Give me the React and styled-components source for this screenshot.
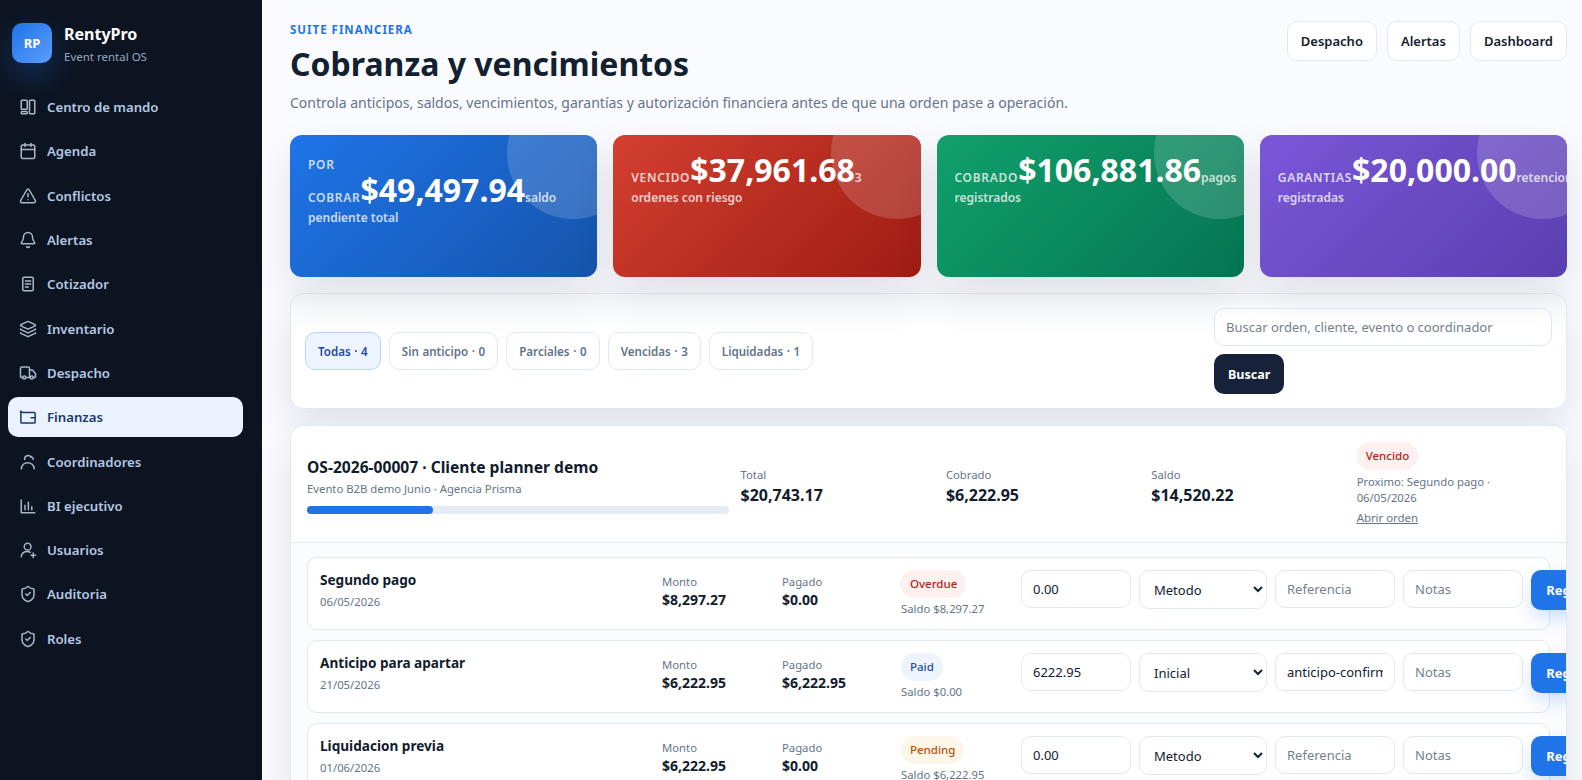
import React from 'react'
import styled, { createGlobalStyle } from 'styled-components'
import { Calendar, TriangleAlert, Bell, Layers, Truck, ShieldCheck } from 'lucide-react'

const GlobalStyle = createGlobalStyle`
  html, body { margin: 0; height: 100%; overflow: hidden; }
  body { font-family: "Noto Sans", "Open Sans", sans-serif; color: #111c2e; background: #f7f9fd; }
  * { box-sizing: border-box; }
`

const Shell = styled.div`
  display: flex;
  height: 780px;
  overflow: hidden;
`

const Sidebar = styled.aside`
  flex: 0 0 262px;
  background: #0d1421;
  padding: 23px 19px 0 8px;
`

const Brand = styled.div`
  display: flex;
  align-items: flex-start;
  gap: 12px;
  padding-left: 4px;
  margin-bottom: 20px;
`

const Logo = styled.div`
  width: 40px;
  height: 40px;
  border-radius: 10px;
  background: linear-gradient(135deg, #1f74e8, #5b9dfb);
  box-shadow: 0 12px 30px rgba(31, 116, 232, 0.3);
  color: #fff;
  font-size: 13px;
  font-weight: 700;
  display: flex;
  align-items: center;
  justify-content: center;
`

const BrandText = styled.div`
  padding-top: 1px;
`

const BrandName = styled.div`
  color: #fff;
  font-size: 16px;
  font-weight: 700;
  line-height: 21px;
`

const BrandSub = styled.div`
  margin-top: 2px;
  color: #93a6c0;
  font-size: 11.5px;
  line-height: 20px;
`

const NavList = styled.nav`
  display: flex;
  flex-direction: column;
  gap: 4px;
`

const NavItem = styled.a`
  display: flex;
  align-items: center;
  gap: 10px;
  height: 40.3px;
  padding-left: 11px;
  border-radius: 10px;
  font-size: 13.2px;
  font-weight: 600;
  color: ${p => (p.$active ? '#173a70' : '#b4c8e4')};
  background: ${p => (p.$active ? '#eaf2fe' : 'transparent')};
  svg { width: 18px; height: 18px; stroke-width: 2; color: ${p => (p.$active ? '#173a70' : '#a9b6c8')}; }
`

const Main = styled.main`
  flex: 1;
  min-width: 0;
  padding: 20px 15px 0 28px;
  background: #fafbff;
`

const Header = styled.header`
  display: flex;
  justify-content: space-between;
  align-items: flex-start;
  margin-bottom: 21px;
`

const Eyebrow = styled.div`
  color: #1f74e8;
  font-size: 11.5px;
  font-weight: 700;
  letter-spacing: 1px;
  line-height: 19px;
`

const Title = styled.h1`
  margin: 0;
  font-size: 32px;
  font-weight: 700;
  line-height: 50px;
  color: #13202f;
`

const Lead = styled.p`
  margin: 3px 0 0;
  font-size: 14.03px;
  line-height: 22px;
  color: #64748b;
`

const HeaderActions = styled.div`
  display: flex;
  gap: 10px;
  padding-top: 1px;
`

const GhostButton = styled.button`
  height: 40px;
  padding: 0 13px;
  background: #fff;
  border: 1px solid #e2e8f2;
  border-radius: 10px;
  font: 600 13px "Noto Sans", sans-serif;
  color: #13202f;
`

const KpiGrid = styled.section`
  display: grid;
  grid-template-columns: repeat(4, 1fr);
  gap: 16px;
  margin-bottom: 16px;
`

const Kpi = styled.div`
  position: relative;
  overflow: hidden;
  height: 142px;
  padding: 19px 18px;
  border-radius: 12px;
  color: #fff;
  line-height: 18px;
  background: ${p => p.$bg};
  box-shadow: 0 18px 40px rgba(15, 23, 42, 0.1);
  &::after {
    content: "";
    position: absolute;
    top: -48px;
    right: -42px;
    width: 132px;
    height: 132px;
    border-radius: 50%;
    background: rgba(255, 255, 255, 0.16);
  }
`

const KpiBody = styled.div`
  position: relative;
  z-index: 1;
`

const KpiLabel = styled.span`
  font-size: 12px;
  font-weight: 600;
  letter-spacing: 0.7px;
  opacity: 0.75;
  text-transform: uppercase;
`

const KpiValue = styled.strong`
  font-size: 32px;
  font-weight: 700;
  line-height: 1;
`

const KpiNote = styled.span`
  font-size: 12px;
  font-weight: 600;
  opacity: 0.75;
`

const Panel = styled.section`
  background: #fff;
  border: 1px solid #e2e8f2;
  border-radius: 14px;
  box-shadow: 0 18px 40px rgba(15, 23, 42, 0.1);
`

const FilterPanel = styled(Panel)`
  display: flex;
  align-items: center;
  justify-content: space-between;
  height: 116px;
  padding: 0 14px;
  margin-bottom: 16px;
  background: linear-gradient(180deg, #f6f8fb 0%, #fff 35%);
`

const Chips = styled.div`
  display: flex;
  gap: 8px;
`

const Chip = styled.button`
  height: 38px;
  padding: 0 12px;
  border-radius: 10px;
  border: 1px solid ${p => (p.$active ? '#b9d3fb' : '#e2e8f2')};
  background: ${p => (p.$active ? '#edf4ff' : '#fff')};
  color: ${p => (p.$active ? '#1d4ba0' : '#64738a')};
  font: 600 11.6px "Noto Sans", sans-serif;
  word-spacing: 0.6px;
`

const SearchBox = styled.div`
  width: 338px;
  display: flex;
  flex-direction: column;
  align-items: flex-start;
  gap: 8px;
`

const TextInput = styled.input`
  width: 100%;
  height: 38px;
  padding: 0 11px;
  border: 1px solid #e2e8f2;
  border-radius: 10px;
  background: #fff;
  font: 400 13px "Noto Sans", sans-serif;
  color: #13202f;
  &::placeholder { color: #757f8f; opacity: 1; }
`

const DarkButton = styled.button`
  height: 40px;
  padding: 0 14px;
  border: 0;
  border-radius: 10px;
  background: #16213a;
  color: #fff;
  font: 700 12.5px "Noto Sans", sans-serif;
`

const OrderPanel = styled(Panel)`
  overflow: hidden;
`

const OrderHead = styled.div`
  display: grid;
  grid-template-columns: 2.18fr repeat(4, 1fr);
  gap: 12px;
  align-items: center;
  height: 117px;
  padding: 0 16px;
  border-bottom: 1px solid #e2e8f2;
  background: #fff;
`

const OrderInfo = styled.div`
  margin-top: 2px;
`

const OrderTitle = styled.div`
  font-size: 15.6px;
  font-weight: 700;
  line-height: 22px;
`

const Muted = styled.div`
  font-size: 11.3px;
  line-height: 18px;
  color: #64748b;
`

const OrderClient = styled(Muted)`
  margin-top: 2px;
`

const OrderFigure = styled.div`
  margin-top: 4px;
`

const NextDue = styled(Muted)`
  margin-top: 4px;
  line-height: 16px;
`

const Track = styled.div`
  height: 8px;
  margin-top: 8px;
  border-radius: 8px;
  background: #e6ebf3;
`

const Fill = styled.div`
  height: 100%;
  border-radius: 8px;
  background: #1f74e8;
`

const Amount = styled.div`
  font-size: 16px;
  font-weight: 700;
  line-height: 22px;
`

const StatusCell = styled.div`
  display: flex;
  flex-direction: column;
  align-items: flex-start;
`

const Badge = styled.span`
  padding: 6px 9px;
  border-radius: 14px;
  font-size: 11.5px;
  font-weight: 500;
  line-height: 16px;
  color: ${p => p.$fg};
  background: ${p => p.$bg};
`

const OpenLink = styled.a`
  margin-top: 4px;
  font-size: 11.4px;
  line-height: 16px;
  color: #64748b;
  text-decoration: underline;
`

const Rows = styled.div`
  display: flex;
  flex-direction: column;
  gap: 10px;
  padding: 14px 16px;
  background: #fbfcfe;
`

const PayRow = styled.div`
  display: grid;
  grid-template-columns: 334px 112px 111px 112px 110px 128px 120px 120px 90px;
  column-gap: 8px;
  align-items: start;
  height: 73px;
  padding: 12px 0 0 12px;
  background: #fff;
  border: 1px solid #e2e8f2;
  border-radius: 10px;
`

const PayName = styled.div`
  font-size: 13.6px;
  font-weight: 700;
  line-height: 20px;
`

const PayDate = styled(Muted)`
  margin-top: 3px;
`

const PayFigure = styled.div`
  margin-top: 3px;
`

const PayValue = styled.div`
  font-size: 14px;
  font-weight: 700;
  line-height: 18px;
`

const Balance = styled(Muted)`
  margin-top: 2px;
`

const CellSelect = styled.select`
  width: 100%;
  height: 39px;
  padding: 0 10px;
  border: 1px solid #e2e8f2;
  border-radius: 10px;
  background: #fff;
  font: 400 13px "Noto Sans", sans-serif;
  color: #13202f;
`

const RegButton = styled.button`
  height: 40px;
  padding: 0 14px;
  border: 0;
  border-radius: 10px;
  background: #1f74e8;
  color: #fff;
  font: 700 13px "Noto Sans", sans-serif;
  white-space: nowrap;
  box-shadow: 0 8px 18px rgba(31, 116, 232, 0.2);
`

const Glyph = ({ children }) => (
  <svg viewBox="0 0 24 24" fill="none" stroke="currentColor" strokeLinecap="round" strokeLinejoin="round">
    {children}
  </svg>
)

const BoardIcon = () => (
  <Glyph>
    <rect x="3" y="3" width="8" height="12" rx="1" />
    <rect x="3" y="18" width="8" height="3" rx="1" />
    <rect x="14" y="3" width="7" height="18" rx="1" />
  </Glyph>
)

const QuoteIcon = () => (
  <Glyph>
    <rect x="5" y="3" width="14" height="18" rx="2" />
    <path d="M8.5 8h7M8.5 12h7M8.5 16h4" />
  </Glyph>
)

const WalletIcon = () => (
  <Glyph>
    <path d="M2.5 4v15a1 1 0 0 0 1 1h17a1 1 0 0 0 1-1V7a1 1 0 0 0-1-1H6A3.5 3.5 0 0 1 2.5 4z" />
    <path d="M21.5 13H16" />
  </Glyph>
)

const CoordinatorsIcon = () => (
  <Glyph>
    <path d="M7.5 8.5a4.5 4.5 0 0 1 8.5-2.5" />
    <path d="M16 4.5a4.5 4.5 0 0 1 3 4" />
    <path d="M3 21c1-5 4.5-8 8.5-8 4.5 0 8 3 9 8" />
  </Glyph>
)

const ChartIcon = () => (
  <Glyph>
    <path d="M3 4v17h18" />
    <path d="M8 17v-6M12.5 17V7M17 17v-4" />
  </Glyph>
)

const AddUserIcon = () => (
  <Glyph>
    <circle cx="11.5" cy="7.5" r="4.5" />
    <path d="M3 21c.5-4 3.5-7 8-7 1.500 0 3 .4 4 1.200" />
    <path d="M19 16v6M16 19h6" />
  </Glyph>
)

const nav = [
  ['Centro de mando', BoardIcon], ['Agenda', Calendar], ['Conflictos', TriangleAlert],
  ['Alertas', Bell], ['Cotizador', QuoteIcon], ['Inventario', Layers], ['Despacho', Truck],
  ['Finanzas', WalletIcon], ['Coordinadores', CoordinatorsIcon], ['BI ejecutivo', ChartIcon],
  ['Usuarios', AddUserIcon], ['Auditoria', ShieldCheck], ['Roles', ShieldCheck],
]

const kpis = [
  ['Por cobrar', '$49,497.94', 'saldo pendiente total', 'linear-gradient(135deg, #1f74e8, #1554ac)'],
  ['Vencido', '$37,961.68', '3 ordenes con riesgo', 'linear-gradient(135deg, #d33f30, #9f1c13)'],
  ['Cobrado', '$106,881.86', 'pagos registrados', 'linear-gradient(135deg, #11a06b, #047553)'],
  ['Garantias', '$20,000.00', 'retenciones registradas', 'linear-gradient(135deg, #7a57d8, #5a3fb0)'],
]

const chips = ['Todas · 4', 'Sin anticipo · 0', 'Parciales · 0', 'Vencidas · 3', 'Liquidadas · 1']

const tones = {
  Overdue: ['#b42318', '#fdf0ef'],
  Paid: ['#1d4ea0', '#edf4ff'],
  Pending: ['#b4540a', '#fdf7e9'],
}

const payments = [
  { name: 'Segundo pago', date: '06/05/2026', monto: '$8,297.27', pagado: '$0.00', status: 'Overdue', saldo: '$8,297.27', amount: '0.00', method: 'Metodo', ref: '' },
  { name: 'Anticipo para apartar', date: '21/05/2026', monto: '$6,222.95', pagado: '$6,222.95', status: 'Paid', saldo: '$0.00', amount: '6222.95', method: 'Inicial', ref: 'anticipo-confirmado' },
  { name: 'Liquidacion previa', date: '01/06/2026', monto: '$6,222.95', pagado: '$0.00', status: 'Pending', saldo: '$6,222.95', amount: '0.00', method: 'Metodo', ref: '' },
]

export default function App() {
  return (
    <Shell>
      <GlobalStyle />
      <Sidebar>
        <Brand>
          <Logo>RP</Logo>
          <BrandText>
            <BrandName>RentyPro</BrandName>
            <BrandSub>Event rental OS</BrandSub>
          </BrandText>
        </Brand>
        <NavList>
          {nav.map(([label, Icon]) => (
            <NavItem key={label} $active={label === 'Finanzas'}><Icon />{label}</NavItem>
          ))}
        </NavList>
      </Sidebar>
      <Main>
        <Header>
          <div>
            <Eyebrow>SUITE FINANCIERA</Eyebrow>
            <Title>Cobranza y vencimientos</Title>
            <Lead>Controla anticipos, saldos, vencimientos, garantías y autorización financiera antes de que una orden pase a operación.</Lead>
          </div>
          <HeaderActions>
            <GhostButton>Despacho</GhostButton>
            <GhostButton>Alertas</GhostButton>
            <GhostButton>Dashboard</GhostButton>
          </HeaderActions>
        </Header>
        <KpiGrid>
          {kpis.map(([label, value, note, bg]) => (
            <Kpi key={label} $bg={bg}>
              <KpiBody>
                <KpiLabel>{label}</KpiLabel><KpiValue>{value}</KpiValue><KpiNote>{note}</KpiNote>
              </KpiBody>
            </Kpi>
          ))}
        </KpiGrid>
        <FilterPanel>
          <Chips>
            {chips.map((c, i) => <Chip key={c} $active={i === 0}>{c}</Chip>)}
          </Chips>
          <SearchBox>
            <TextInput placeholder="Buscar orden, cliente, evento o coordinador" />
            <DarkButton>Buscar</DarkButton>
          </SearchBox>
        </FilterPanel>
        <OrderPanel>
          <OrderHead>
            <OrderInfo>
              <OrderTitle>OS-2026-00007 · Cliente planner demo</OrderTitle>
              <OrderClient>Evento B2B demo Junio · Agencia Prisma</OrderClient>
              <Track><Fill style={{ width: '30%' }} /></Track>
            </OrderInfo>
            <OrderFigure><Muted>Total</Muted><Amount>$20,743.17</Amount></OrderFigure>
            <OrderFigure><Muted>Cobrado</Muted><Amount>$6,222.95</Amount></OrderFigure>
            <OrderFigure><Muted>Saldo</Muted><Amount>$14,520.22</Amount></OrderFigure>
            <StatusCell>
              <Badge $fg="#b42318" $bg="#fdf0ef">Vencido</Badge>
              <NextDue>Proximo: Segundo pago · 06/05/2026</NextDue>
              <OpenLink>Abrir orden</OpenLink>
            </StatusCell>
          </OrderHead>
          <Rows>
            {payments.map(p => (
              <PayRow key={p.name}>
                <div><PayName>{p.name}</PayName><PayDate>{p.date}</PayDate></div>
                <PayFigure><Muted>Monto</Muted><PayValue>{p.monto}</PayValue></PayFigure>
                <PayFigure><Muted>Pagado</Muted><PayValue>{p.pagado}</PayValue></PayFigure>
                <StatusCell>
                  <Badge $fg={tones[p.status][0]} $bg={tones[p.status][1]}>{p.status}</Badge>
                  <Balance>Saldo {p.saldo}</Balance>
                </StatusCell>
                <TextInput defaultValue={p.amount} />
                <CellSelect defaultValue={p.method}><option>Metodo</option><option>Inicial</option></CellSelect>
                <TextInput placeholder="Referencia" defaultValue={p.ref} />
                <TextInput placeholder="Notas" />
                <RegButton>Registrar</RegButton>
              </PayRow>
            ))}
          </Rows>
        </OrderPanel>
      </Main>
    </Shell>
  )
}
